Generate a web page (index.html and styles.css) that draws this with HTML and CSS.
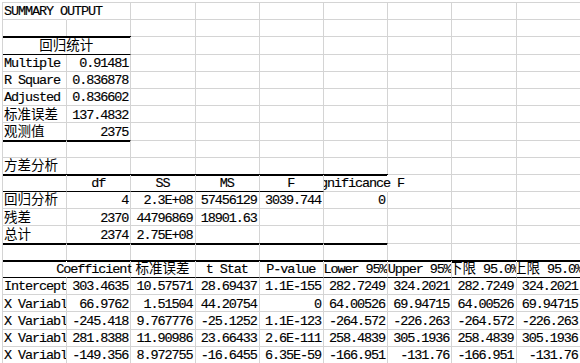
FILE: index.html
```html
<!DOCTYPE html>
<html>
<head>
<meta charset="utf-8">
<link rel="stylesheet" href="styles.css">
</head>
<body>
<div class="sheet">
  <!-- row 1 -->
  <div class="ov nr">SUMMARY OUTPUT</div><div></div><div></div><div></div><div></div><div></div><div></div><div></div><div></div>
  <!-- row 2 -->
  <div></div><div></div><div></div><div></div><div></div><div></div><div></div><div></div><div></div>
  <!-- row 3 -->
  <div class="s2 m tt hb"><span class="cj">回归统计</span></div><div></div><div></div><div></div><div></div><div></div><div></div><div></div>
  <!-- row 4 -->
  <div>Multiple R</div><div class="r">0.91481</div><div></div><div></div><div></div><div></div><div></div><div></div><div></div>
  <!-- row 5 -->
  <div>R Square</div><div class="r">0.836878</div><div></div><div></div><div></div><div></div><div></div><div></div><div></div>
  <!-- row 6 -->
  <div>Adjusted R Square</div><div class="r">0.836602</div><div></div><div></div><div></div><div></div><div></div><div></div><div></div>
  <!-- row 7 -->
  <div><span class="cj">标准误差</span></div><div class="r">137.4832</div><div></div><div></div><div></div><div></div><div></div><div></div><div></div>
  <!-- row 8 -->
  <div class="tb"><span class="cj">观测值</span></div><div class="r tb">2375</div><div></div><div></div><div></div><div></div><div></div><div></div><div></div>
  <!-- row 9 -->
  <div></div><div></div><div></div><div></div><div></div><div></div><div></div><div></div><div></div>
  <!-- row 10 -->
  <div><span class="cj">方差分析</span></div><div></div><div></div><div></div><div></div><div></div><div></div><div></div><div></div>
  <!-- row 11 -->
  <div class="tt hb"></div><div class="m tt hb">df</div><div class="m tt hb">SS</div><div class="m tt hb">MS</div><div class="m tt hb">F</div><div class="m tt nr cl">Significance F</div><div></div><div></div><div></div>
  <!-- row 12 -->
  <div><span class="cj">回归分析</span></div><div class="r">4</div><div class="r">2.3E+08</div><div class="r">57456129</div><div class="r">3039.744</div><div class="r">0</div><div></div><div></div><div></div>
  <!-- row 13 -->
  <div><span class="cj">残差</span></div><div class="r">2370</div><div class="r">44796869</div><div class="r">18901.63</div><div></div><div></div><div></div><div></div><div></div>
  <!-- row 14 -->
  <div class="tb"><span class="cj">总计</span></div><div class="r tb">2374</div><div class="r tb">2.75E+08</div><div class="tb"></div><div class="tb"></div><div class="tb"></div><div></div><div></div><div></div>
  <!-- row 15 -->
  <div></div><div></div><div></div><div></div><div></div><div></div><div></div><div></div><div></div>
  <!-- row 16 -->
  <div class="tt hb nr"></div><div class="m tt hb cr">Coefficients</div><div class="m tt hb"><span class="cj">标准误差</span></div><div class="m tt hb">t Stat</div><div class="m tt hb">P-value</div><div class="m tt hb">Lower 95%</div><div class="m tt hb">Upper 95%</div><div class="m tt hb"><span class="cj">下限</span>&nbsp;95.0%</div><div class="m tt hb"><span class="cj">上限</span>&nbsp;95.0%</div>
  <!-- row 17 -->
  <div>Intercept</div><div class="r">303.4635</div><div class="r">10.57571</div><div class="r">28.69437</div><div class="r">1.1E-155</div><div class="r">282.7249</div><div class="r">324.2021</div><div class="r">282.7249</div><div class="r">324.2021</div>
  <!-- row 18 -->
  <div>X Variable 1</div><div class="r">66.9762</div><div class="r">1.51504</div><div class="r">44.20754</div><div class="r">0</div><div class="r">64.00526</div><div class="r">69.94715</div><div class="r">64.00526</div><div class="r">69.94715</div>
  <!-- row 19 -->
  <div>X Variable 2</div><div class="r">-245.418</div><div class="r">9.767776</div><div class="r">-25.1252</div><div class="r">1.1E-123</div><div class="r">-264.572</div><div class="r">-226.263</div><div class="r">-264.572</div><div class="r">-226.263</div>
  <!-- row 20 -->
  <div>X Variable 3</div><div class="r">281.8388</div><div class="r">11.90986</div><div class="r">23.66433</div><div class="r">2.6E-111</div><div class="r">258.4839</div><div class="r">305.1936</div><div class="r">258.4839</div><div class="r">305.1936</div>
  <!-- row 21 -->
  <div>X Variable 4</div><div class="r">-149.356</div><div class="r">8.972755</div><div class="r">-16.6455</div><div class="r">6.35E-59</div><div class="r">-166.951</div><div class="r">-131.76</div><div class="r">-166.951</div><div class="r">-131.76</div>
</div>
</body>
</html>
```
FILE: styles.css
```css
html, body {
  margin: 0;
  padding: 0;
  background: #fff;
  overflow: hidden;
  width: 580px;
  height: 363px;
}

body {
  font-family: "Liberation Mono", "Cousine", "DejaVu Sans Mono", monospace;
  font-size: 13.5px;
  letter-spacing: -1.1px;
  color: #000;
  -webkit-text-stroke: 0.15px #000;
}

.sheet {
  display: grid;
  grid-template-columns: repeat(9, 64.2px);
  grid-auto-rows: 17.2px;
  margin: 2px 0 0 2px;
  border-left: 1px solid #d4d4d4;
  border-top: 1px solid #d4d4d4;
}

.sheet > div {
  display: flex;
  align-items: flex-start;
  box-sizing: border-box;
  border-right: 1px solid #d4d4d4;
  border-bottom: 1px solid #d4d4d4;
  padding: 1.4px 2px 0 1px;
  line-height: 16px;
  white-space: nowrap;
  overflow-x: clip;
  overflow-y: visible;
  min-width: 0;
}

.sheet > .r { justify-content: flex-end; }
.sheet > .m { justify-content: center; }
.sheet > .ov { overflow: visible; }
.sheet > .nr { border-right-color: transparent; }
.sheet > .s2 { grid-column: span 2; }

.sheet > .tt { box-shadow: 0 -1px 0 #000, inset 0 1px 0 #000; }
.sheet > .hb { border-bottom-color: #000; }
.sheet > .tb { border-bottom-color: #000; box-shadow: 0 1px 0 #000; }

.sheet > .cl { overflow: visible; clip-path: inset(-4px -200px -4px 0); }
.sheet > .cr { overflow: visible; clip-path: inset(-4px 0 -4px -200px); }

.cj {
  font-family: "Noto Sans CJK SC", sans-serif;
  letter-spacing: 0;
  line-height: 10px;
  -webkit-text-stroke: 0;
}
```
